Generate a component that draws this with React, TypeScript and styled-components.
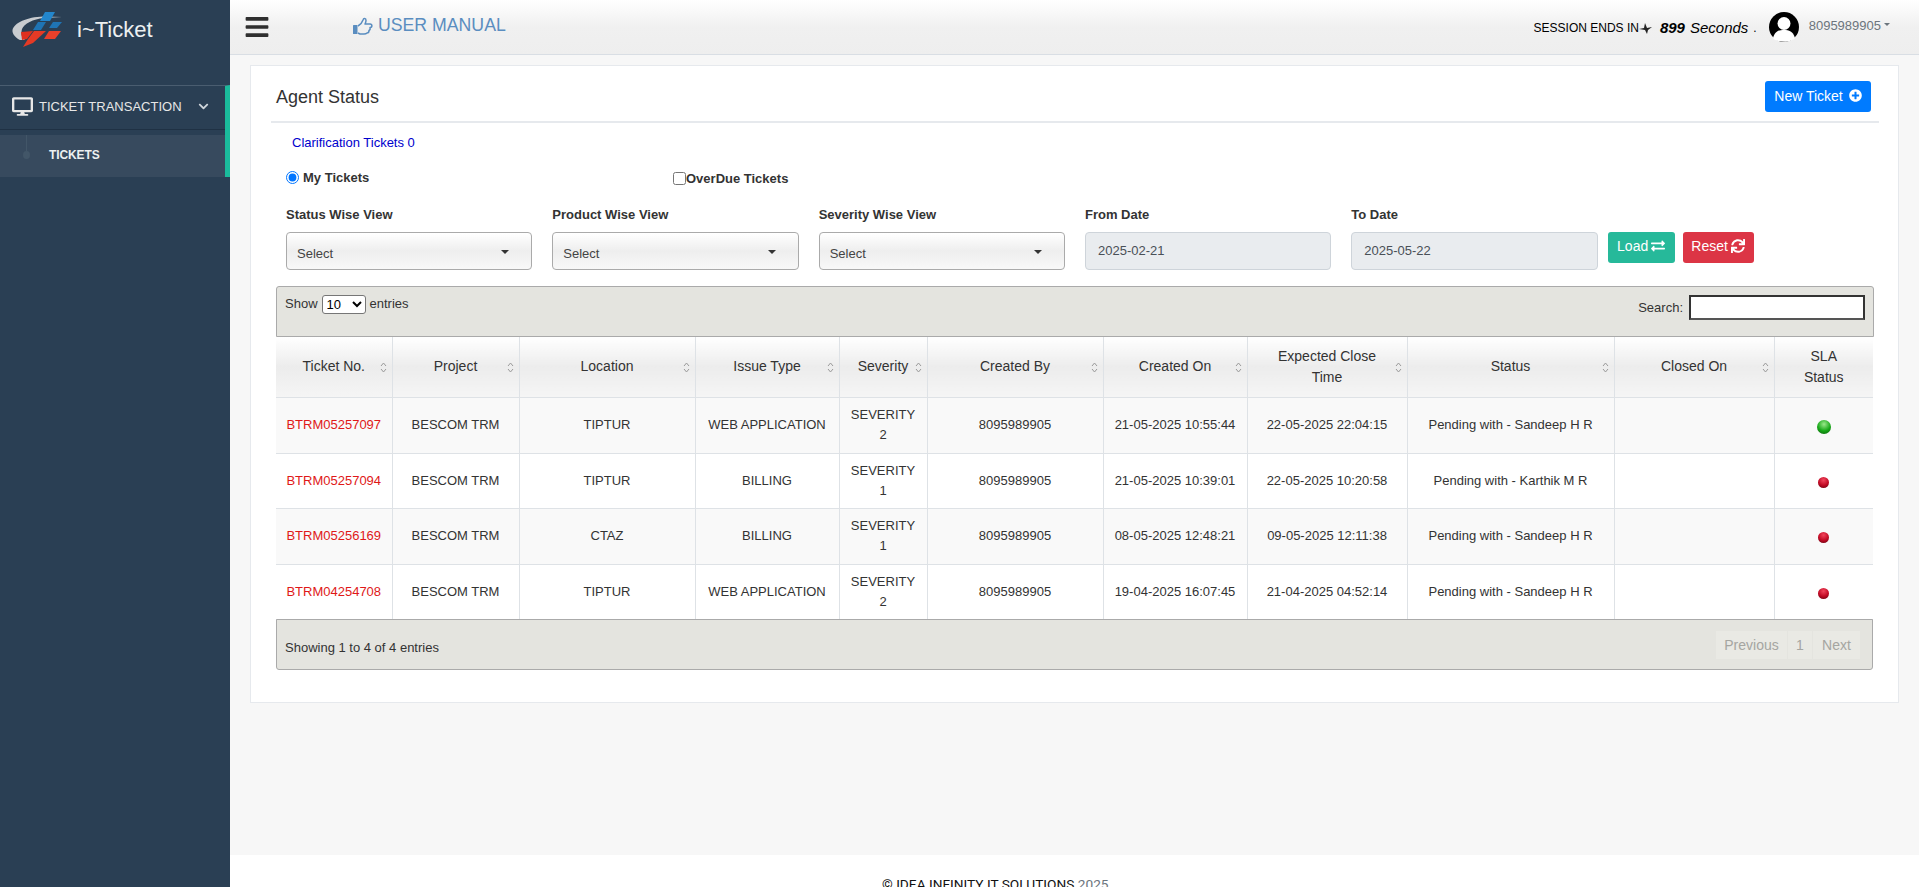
import React from "react";
import styled, { createGlobalStyle } from "styled-components";
import { FaBars, FaDesktop, FaChevronDown, FaPlusCircle, FaExchangeAlt, FaSync } from "react-icons/fa";

const Global = createGlobalStyle`
  html, body { margin: 0; padding: 0; height: 100%; overflow: hidden; }
  body { font-family: "Liberation Sans", Arial, sans-serif; font-size: 13px; color: #333; background: #f7f7f7; }
  * { box-sizing: border-box; }
`;

const Shell = styled.div`
  display: flex;
  width: 1919px;
  height: 887px;
  overflow: hidden;
`;
const Sidebar = styled.aside`
  width: 230px;
  flex: none;
  background: #2a3f54;
  color: #ecf0f1;
`;
const Brand = styled.div`
  height: 57px;
  display: flex;
  align-items: center;
  padding-left: 12px;
  gap: 15px;
  font-size: 22px;
  color: #ecf0f1;
  span { padding-top: 2px; }
`;
const MenuGroup = styled.nav`
  margin-top: 28px;
  border-top: 1px solid #4a5d70;
  border-right: 5px solid #1abb9c;
`;
const MenuHead = styled.div`
  height: 43px;
  display: flex;
  align-items: center;
  padding: 0 0 2px 12px;
  font-size: 13px;
  color: #e7e7e7;
  box-shadow: 0 1px 0 #1f3144;
  svg:first-child { font-size: 21px; margin-right: 6px; }
  svg:last-child { font-size: 11px; margin-left: 16px; color: #d0d6dc; }
`;
const SubItem = styled.div`
  position: relative;
  height: 42px;
  margin-top: 6px;
  display: flex;
  align-items: center;
  padding: 0 0 3px 49px;
  background: #374a5e;
  color: #ecf0f1;
  font-size: 12px;
  font-weight: bold;
  letter-spacing: -0.1px;
`;
const SubLine = styled.span`
  position: absolute;
  left: 26px;
  top: 0;
  width: 1px;
  height: 16px;
  background: #425668;
`;
const SubDot = styled.span`
  position: absolute;
  left: 23px;
  top: 16px;
  width: 7px;
  height: 8px;
  border-radius: 50%;
  background: #425668;
`;
const Main = styled.main`
  flex: 1;
  min-width: 0;
  display: flex;
  flex-direction: column;
`;
const Topbar = styled.header`
  height: 55px;
  flex: none;
  display: flex;
  align-items: flex-start;
  background: linear-gradient(#fff 0, #f0f0f0 50%, #eeeeee 100%);
  border-bottom: 1px solid #d9dee4;
  padding-left: 14px;
`;
const Burger = styled.div`
  font-size: 26px;
  color: #2f2f2f;
  margin-top: 14px;
  line-height: 0;
`;
const Manual = styled.div`
  margin-left: 83px;
  margin-top: 15px;
  display: flex;
  align-items: center;
  gap: 5px;
  font-size: 17.7px;
  color: #5a8dc0;
`;
const HandIcon = styled.svg`
  width: 20px;
  height: 18px;
  flex: none;
`;
const Session = styled.div`
  margin-left: auto;
  margin-top: 19px;
  font-size: 12px;
  color: #000;
  display: flex;
  align-items: center;
`;
const Spinner = styled.svg`
  width: 14px;
  height: 14px;
  margin-right: 7px;
`;
const Count = styled.b`
  font-style: italic;
  font-size: 15px;
  margin-right: 5px;
`;
const Secs = styled.i`
  font-size: 15px;
  margin-right: 5px;
`;
const Avatar = styled.svg`
  width: 30px;
  height: 30px;
  margin: 12px 0 0 12px;
  flex: none;
`;
const UserName = styled.div`
  margin: 18px 29px 0 10px;
  font-size: 13px;
  color: #6c757d;
  display: flex;
  align-items: center;
  gap: 3px;
  &::after {
    content: "";
    border: 3px solid transparent;
    border-top-color: #6c757d;
    border-bottom: 0;
    margin-bottom: 3px;
  }
`;
const Content = styled.div`
  flex: 1;
  padding: 10px 20px 0 20px;
`;
const Card = styled.section`
  height: 638px;
  background: #fff;
  border: 1px solid #e6e9ed;
  padding: 0 20px;
`;
const CardHead = styled.div`
  height: 57px;
  display: flex;
  justify-content: space-between;
  border-bottom: 2px solid #e6e9ed;
  padding: 15px 8px 0 5px;
  margin-right: -1px;
`;
const Title = styled.h2`
  margin: 6px 0 0;
  font-size: 18px;
  font-weight: 400;
  color: #333;
`;
const PrimaryBtn = styled.button`
  height: 31px;
  width: 106px;
  border: 0;
  border-radius: 3px;
  background: #007bff;
  color: #fff;
  font: 14px "Liberation Sans", Arial, sans-serif;
  display: flex;
  align-items: center;
  justify-content: center;
  gap: 6px;
  padding: 0 0 2px;
  svg { font-size: 13px; }
`;
const Clarify = styled.div`
  margin: 12px 0 0 21px;
  font-size: 13px;
  line-height: 15px;
  color: #0000cd;
`;
const ChoiceRow = styled.div`
  display: flex;
  align-items: flex-start;
  margin: 20px 0 0 15px;
  height: 30px;
`;
const RadioLabel = styled.label`
  display: flex;
  align-items: center;
  font-weight: bold;
  font-size: 13px;
  width: 387px;
  color: #333;
  input { margin: 0 4px 0 0; width: 13px; height: 13px; accent-color: #0075ff; }
`;
const CheckLabel = styled(RadioLabel)`
  margin-top: 1px;
  width: auto;
  input { margin: 0; }
`;
const Filters = styled.div`
  display: grid;
  grid-template-columns: repeat(6, 266.33px);
  margin-top: 6px;
`;
const Field = styled.div`
  padding: 0 5px 0 15px;
`;
const FieldLabel = styled.div`
  height: 25.5px;
  font-weight: bold;
  font-size: 13px;
  color: #333;
  padding-top: 1px;
`;
const SelectBox = styled.div`
  height: 38px;
  border: 1px solid #aaa;
  border-radius: 4px;
  background: linear-gradient(#fff 0, #eeeeee 50%, #f8f8f8 100%);
  display: flex;
  align-items: center;
  justify-content: space-between;
  padding: 6px 22px 0 10px;
  color: #444;
  font-size: 13px;
  &::after {
    content: "";
    border: 4px solid transparent;
    border-top-color: #333;
    border-bottom: 0;
    margin-top: -3px;
  }
`;
const DateBox = styled.div`
  height: 38px;
  border: 1px solid #ced4da;
  border-radius: 4px;
  background: #e9ecef;
  display: flex;
  align-items: center;
  padding-left: 12px;
  color: #495057;
  font-size: 13px;
`;
const ActionCell = styled.div`
  padding: 25.5px 0 0 5px;
  display: flex;
  gap: 8px;
  align-items: flex-start;
`;
const ActionBtn = styled.button<{ $bg: string; $w: number }>`
  height: 31px;
  width: ${(p) => p.$w}px;
  border: 0;
  border-radius: 3px;
  background: ${(p) => p.$bg};
  color: #fff;
  font: 14px "Liberation Sans", Arial, sans-serif;
  display: flex;
  align-items: center;
  justify-content: center;
  gap: 3px;
  padding: 0 0 2px;
`;
const TableWrap = styled.div`
  margin: 16px 0 0 5px;
  width: 1598px;
`;
const BarTop = styled.div`
  height: 51px;
  background: #e4e4df;
  border: 1px solid #aaa;
  border-radius: 3px 3px 0 0;
  display: flex;
  justify-content: space-between;
  padding: 9px 8px 0 8px;
  font-size: 13px;
  color: #333;
`;
const ShowCtl = styled.div`
  display: flex;
  align-items: flex-start;
  gap: 4px;
  select {
    height: 19px;
    width: 44px;
    font: 13px "Liberation Sans", Arial, sans-serif;
    background: #fff;
    border: 1px solid #767676;
    border-radius: 3px;
    padding: 0;
    margin-top: -1px;
  }
`;
const SearchCtl = styled.div`
  display: flex;
  align-items: center;
  gap: 6px;
  height: 26px;
  margin-top: -1px;
`;
const SearchInput = styled.div`
  width: 176px;
  height: 25px;
  background: #fff;
  border: 2px solid #333;
  border-bottom-color: #555;
`;
const Table = styled.table`
  width: 1597px;
  table-layout: fixed;
  border-collapse: collapse;
  font-size: 13px;
`;
const Th = styled.th`
  position: relative;
  height: 61px;
  padding: 0;
  font-weight: 400;
  font-size: 14px;
  line-height: 21px;
  text-align: center;
  white-space: pre;
  color: #333;
  background: linear-gradient(#fff 0, #ececec 50%, #f5f5f5 100%);
  border-left: 1px solid #dee2e6;
  border-bottom: 1px solid #dee2e6;
  &:first-child { border-left: 0; }
`;
const Sort = styled.svg`
  position: absolute;
  right: 5px;
  top: 25px;
  width: 7px;
  height: 11px;
`;
const Row = styled.tr<{ $alt: boolean }>`
  background: ${(p) => (p.$alt ? "#f9f9f9" : "#fff")};
`;
const Td = styled.td`
  height: 55.5px;
  padding: 0 8px;
  text-align: center;
  line-height: 20px;
  color: #333;
  border-left: 1px solid #dee2e6;
  border-bottom: 1px solid #dee2e6;
  &:first-child { border-left: 0; }
`;
const TicketLink = styled.span`
  color: #e01818;
`;
const Dot = styled.span<{ $green: boolean }>`
  display: inline-block;
  vertical-align: middle;
  margin-top: 2px;
  width: ${(p) => (p.$green ? 14 : 11)}px;
  height: ${(p) => (p.$green ? 14 : 11)}px;
  border-radius: 50%;
  background: ${(p) =>
    p.$green
      ? "radial-gradient(circle at 50% 30%, #9be88a, #18a818 55%, #0a5a0a)"
      : "radial-gradient(circle at 50% 28%, #f2455c, #c00a24 55%, #5a0410)"};
`;
const BarBottom = styled.div`
  height: 51px;
  margin-top: -1px;
  width: 1597px;
  background: #e4e4df;
  border: 1px solid #aaa;
  border-radius: 0 0 3px 3px;
  display: flex;
  justify-content: space-between;
  align-items: center;
  padding: 5px 12px 0 8px;
  font-size: 13px;
  color: #333;
`;
const Pager = styled.div`
  display: flex;
  height: 28px;
  gap: 1px;
  font-size: 14px;
  color: #a5a5a1;
  margin-top: -5px;
`;
const PageBtn = styled.span<{ $w: number }>`
  width: ${(p) => p.$w}px;
  background: #e9e9e4;
  display: flex;
  align-items: center;
  justify-content: center;
`;
const FooterBar = styled.footer`
  height: 32px;
  flex: none;
  background: #fff;
  padding: 21px 0 0 652px;
  font-family: Roboto, sans-serif;
  font-size: 13.7px;
  line-height: 16px;
  color: #111;
  overflow: hidden;
  white-space: nowrap;
  span { color: #6c757d; }
`;

const Logo = () => (
  <svg width="50" height="36" viewBox="12 13 50 36">
    <path d="M12.5 32 C14 25 27 19 43 18.5 L62 19 L44 20 C33 21 24 26 22 31 C21 35 21 39 25 42 L20 42 C16 40 12 36 12.5 32 Z" fill="#c8ccd0" />
    <polygon points="45,14 55,14 50,23 40,23" fill="#2386cc" />
    <polygon points="38,24 46,24 41,32 33,32" fill="#1f74b4" />
    <polygon points="53,24 62,24 57,30 49,30" fill="#1f74b4" />
    <polygon points="21,34 33,33 27,41 22,42" fill="#e0301f" />
    <polygon points="34,33 46,33 33,45 23,49 28,41" fill="#e53a25" />
    <polygon points="49,33 61,33 55,41 44,41" fill="#e8402a" />
  </svg>
);

const SortIcon = () => (
  <Sort viewBox="0 0 7 11">
    <path d="M1 4 L3.5 1 L6 4" fill="none" stroke="#9a9a9a" />
    <path d="M1 7 L3.5 10 L6 7" fill="none" stroke="#9a9a9a" />
  </Sort>
);

const widths = [116, 127, 176, 144, 88, 176, 144, 160, 207, 160, 99];
const heads = ["Ticket No.", "Project", "Location", "Issue Type", "Severity", "Created By", "Created On", "Expected Close\nTime", "Status", "Closed On", "SLA\nStatus"];
const rows = [
  { id: "BTRM05257097", loc: "TIPTUR", issue: "WEB APPLICATION", sev: "SEVERITY 2", on: "21-05-2025 10:55:44", exp: "22-05-2025 22:04:15", who: "Sandeep H R", green: true },
  { id: "BTRM05257094", loc: "TIPTUR", issue: "BILLING", sev: "SEVERITY 1", on: "21-05-2025 10:39:01", exp: "22-05-2025 10:20:58", who: "Karthik M R", green: false },
  { id: "BTRM05256169", loc: "CTAZ", issue: "BILLING", sev: "SEVERITY 1", on: "08-05-2025 12:48:21", exp: "09-05-2025 12:11:38", who: "Sandeep H R", green: false },
  { id: "BTRM04254708", loc: "TIPTUR", issue: "WEB APPLICATION", sev: "SEVERITY 2", on: "19-04-2025 16:07:45", exp: "21-04-2025 04:52:14", who: "Sandeep H R", green: false },
];

export default function App() {
  return (
    <Shell>
      <Global />
      <Sidebar>
        <Brand>
          <Logo />
          <span>i~Ticket</span>
        </Brand>
        <MenuGroup>
          <MenuHead>
            <FaDesktop />
            TICKET TRANSACTION
            <FaChevronDown />
          </MenuHead>
          <SubItem>
            <SubLine />
            <SubDot />
            TICKETS
          </SubItem>
        </MenuGroup>
      </Sidebar>
      <Main>
        <Topbar>
          <Burger><FaBars /></Burger>
          <Manual>
            <HandIcon viewBox="0 0 20 18">
              <rect x="0" y="8" width="4.5" height="9" rx="0.5" fill="#5a8dc0" />
              <path d="M5 9 C7 8 9 6 10 3 C10.5 1 13 1 13 3.5 C13 5 12.5 6 12 7 L17 7 C19.5 7 19.5 10.5 17 10.5 C17.5 12 17 13 16 13.5 C16 15 15 16 14 16 C13 17 12 17 11 17 L7 17 L5 16" fill="none" stroke="#5a8dc0" strokeWidth="1.5" strokeLinejoin="round" />
            </HandIcon>
            USER MANUAL
          </Manual>
          <Session>
            SESSION ENDS IN
            <Spinner viewBox="0 0 14 14">
              <path d="M0 8 L5 7 L6 2 L8 7 L13 6 L9 9 L8 13 L6 9 Z" fill="#222" />
            </Spinner>
            <Count>899</Count>
            <Secs>Seconds</Secs>.
          </Session>
          <Avatar viewBox="0 0 30 30">
            <circle cx="15" cy="15" r="15" fill="#000" />
            <circle cx="15" cy="11.5" r="6.5" fill="#fff" />
            <path d="M4 26 C6 19 10 18 15 18 C20 18 24 19 26 26 C22 31 8 31 4 26 Z" fill="#fff" />
          </Avatar>
          <UserName>8095989905</UserName>
        </Topbar>
        <Content>
          <Card>
            <CardHead>
              <Title>Agent Status</Title>
              <PrimaryBtn>New Ticket <FaPlusCircle /></PrimaryBtn>
            </CardHead>
            <Clarify>Clarification Tickets 0</Clarify>
            <ChoiceRow>
              <RadioLabel><input type="radio" name="v" defaultChecked />My Tickets</RadioLabel>
              <CheckLabel><input type="checkbox" />OverDue Tickets</CheckLabel>
            </ChoiceRow>
            <Filters>
              <Field><FieldLabel>Status Wise View</FieldLabel><SelectBox>Select</SelectBox></Field>
              <Field><FieldLabel>Product Wise View</FieldLabel><SelectBox>Select</SelectBox></Field>
              <Field><FieldLabel>Severity Wise View</FieldLabel><SelectBox>Select</SelectBox></Field>
              <Field><FieldLabel>From Date</FieldLabel><DateBox>2025-02-21</DateBox></Field>
              <Field><FieldLabel>To Date</FieldLabel><DateBox>2025-05-22</DateBox></Field>
              <ActionCell>
                <ActionBtn $bg="#26b99a" $w={67}>Load <FaExchangeAlt /></ActionBtn>
                <ActionBtn $bg="#dc3545" $w={71}>Reset <FaSync /></ActionBtn>
              </ActionCell>
            </Filters>
            <TableWrap>
              <BarTop>
                <ShowCtl>
                  Show
                  <select defaultValue="10"><option>10</option><option>25</option><option>50</option></select>
                  entries
                </ShowCtl>
                <SearchCtl>Search:<SearchInput /></SearchCtl>
              </BarTop>
              <Table>
                <colgroup>
                  {widths.map((w, i) => <col key={i} style={{ width: w }} />)}
                </colgroup>
                <thead>
                  <tr>
                    {heads.map((h, i) => (
                      <Th key={h}>{h}{i < 10 && <SortIcon />}</Th>
                    ))}
                  </tr>
                </thead>
                <tbody>
                  {rows.map((r, i) => (
                    <Row key={r.id} $alt={i % 2 === 0}>
                      <Td><TicketLink>{r.id}</TicketLink></Td>
                      <Td>BESCOM TRM</Td>
                      <Td>{r.loc}</Td>
                      <Td>{r.issue}</Td>
                      <Td>{r.sev}</Td>
                      <Td>8095989905</Td>
                      <Td>{r.on}</Td>
                      <Td>{r.exp}</Td>
                      <Td>Pending with - {r.who}</Td>
                      <Td />
                      <Td><Dot $green={r.green} /></Td>
                    </Row>
                  ))}
                </tbody>
              </Table>
              <BarBottom>
                Showing 1 to 4 of 4 entries
                <Pager>
                  <PageBtn $w={71}>Previous</PageBtn>
                  <PageBtn $w={24}>1</PageBtn>
                  <PageBtn $w={47}>Next</PageBtn>
                </Pager>
              </BarBottom>
            </TableWrap>
          </Card>
        </Content>
        <FooterBar>© IDEA INFINITY IT SOLUTIONS <span>2025</span></FooterBar>
      </Main>
    </Shell>
  );
}
